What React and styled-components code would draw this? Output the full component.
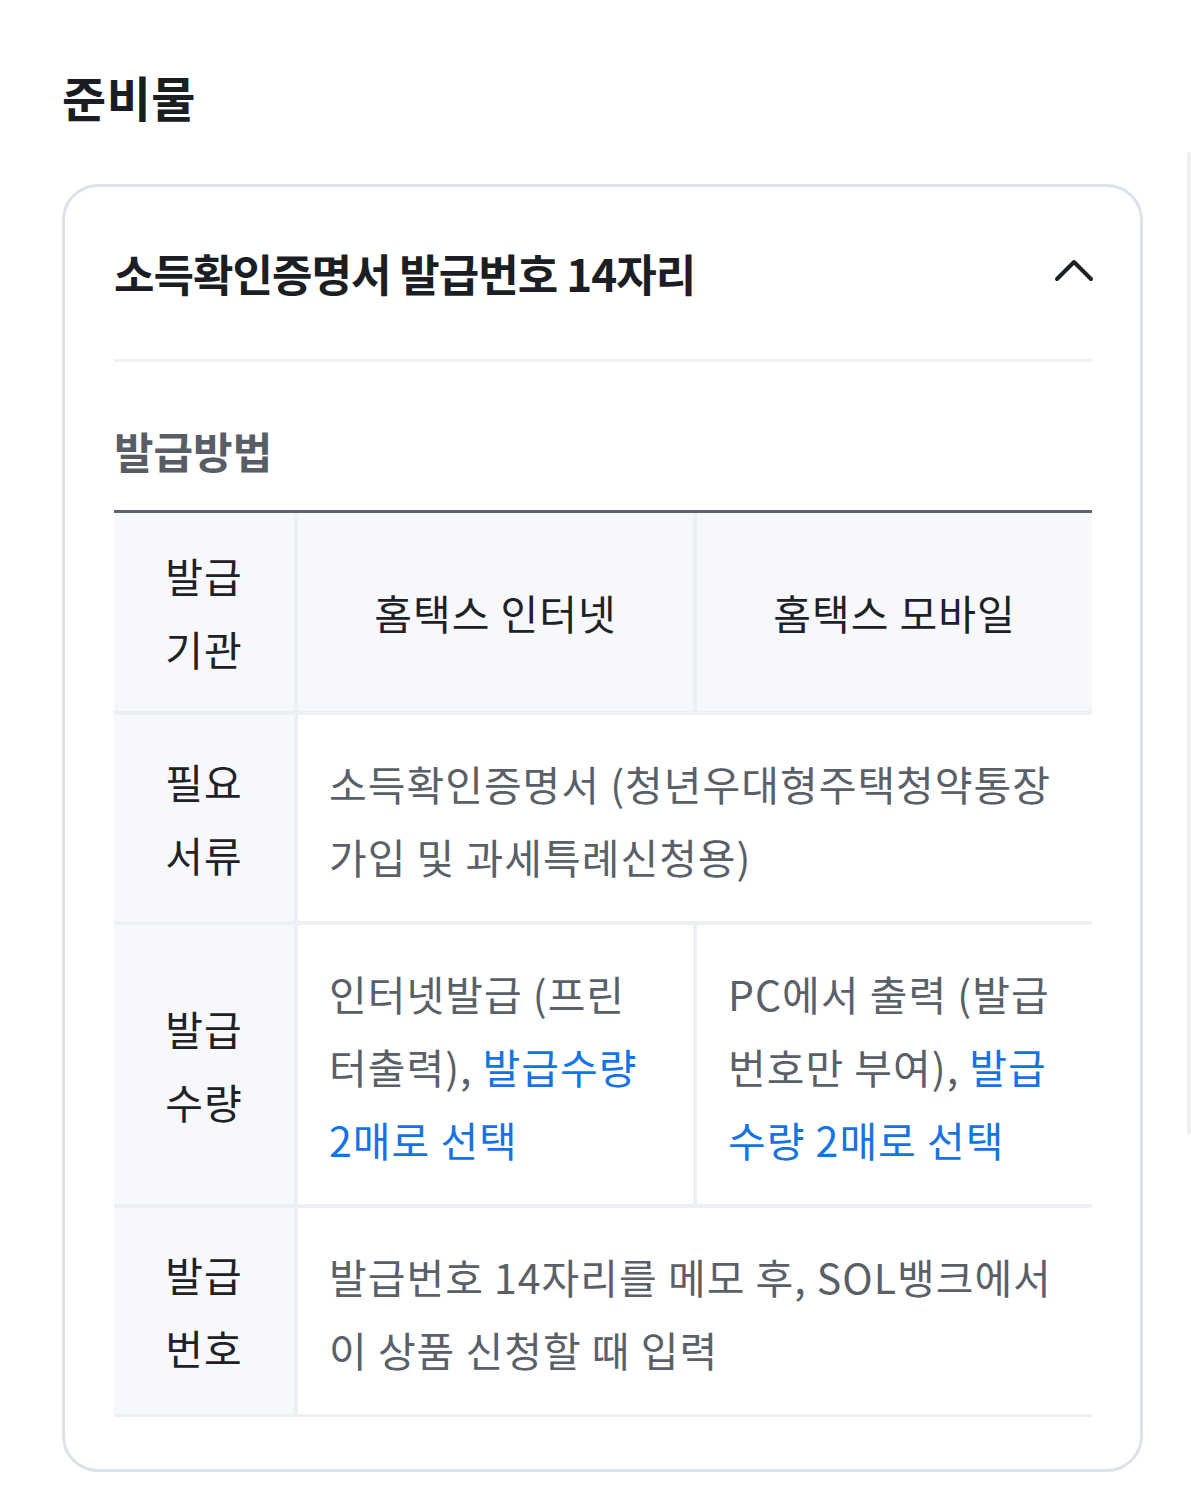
import styled, { createGlobalStyle } from 'styled-components';

const GlobalStyle = createGlobalStyle`
  html, body {
    margin: 0;
    padding: 0;
    background: #ffffff;
  }
  body {
    font-family: 'Noto Sans CJK KR', 'Noto Sans', sans-serif;
    -webkit-font-smoothing: antialiased;
  }
`;

const rows = [
  {
    head: ['발급', '기관'],
    cells: [{ text: '홈택스 인터넷' }, { text: '홈택스 모바일' }],
    shaded: true,
  },
  {
    head: ['필요', '서류'],
    cells: [
      {
        span: true,
        parts: [
          { text: '소득확인증명서 (청년우대형주택청약통장' },
          { br: true },
          { text: '가입 및 과세특례신청용)' },
        ],
      },
    ],
  },
  {
    head: ['발급', '수량'],
    cells: [
      {
        parts: [
          { text: '인터넷발급 (프린' },
          { br: true },
          { text: '터출력), ' },
          { text: '발급수량', link: true },
          { br: true },
          { text: '2매로 선택', link: true },
        ],
      },
      {
        parts: [
          { text: 'PC에서 출력 (발급' },
          { br: true },
          { text: '번호만 부여), ' },
          { text: '발급', link: true },
          { br: true },
          { text: '수량 2매로 선택', link: true },
        ],
      },
    ],
  },
  {
    head: ['발급', '번호'],
    cells: [
      {
        span: true,
        parts: [
          { text: '발급번호 14자리를 메모 후, SOL뱅크에서' },
          { br: true },
          { text: '이 상품 신청할 때 입력' },
        ],
      },
    ],
  },
];

const App = () => {
  return (
    <>
      <GlobalStyle />
      <Page>
        <Title>준비물</Title>
        <Card>
          <CardHeader>
            <CardTitle>소득확인증명서 발급번호 14자리</CardTitle>
            <Chevron viewBox='0 0 40 26' aria-hidden='true'>
              <path d='M3 22 L20 5 L37 22' />
            </Chevron>
          </CardHeader>
          <Divider />
          <SubTitle>발급방법</SubTitle>
          <Table>
            {rows.map((row, i) => (
              <Row key={i}>
                <HeadCell>
                  <span>
                    {row.head[0]}
                    <br />
                    {row.head[1]}
                  </span>
                </HeadCell>
                {row.cells.map((cell, j) =>
                  row.shaded ? (
                    <CenterCell key={j}>{cell.text}</CenterCell>
                  ) : (
                    <TextCell key={j} $span={cell.span}>
                      {cell.parts.map((p, k) =>
                        p.br ? (
                          <br key={k} />
                        ) : p.link ? (
                          <Link key={k}>{p.text}</Link>
                        ) : (
                          <span key={k}>{p.text}</span>
                        )
                      )}
                    </TextCell>
                  )
                )}
              </Row>
            ))}
          </Table>
        </Card>
        <ScrollThumb />
      </Page>
    </>
  );
};

const Page = styled.main`
  position: relative;
  min-height: 1503px;
  box-sizing: border-box;
  padding: 66px 48px 0 62px;
`;

const Title = styled.h2`
  margin: 0 0 58px;
  font-size: 48px;
  line-height: 60px;
  font-weight: 700;
  letter-spacing: 0.5px;
  color: #1a1d21;
`;

const Card = styled.section`
  border: 3px solid #dde2e8;
  border-radius: 36px;
  padding: 0 48px 52px 49px;
`;

const CardHeader = styled.div`
  height: 172px;
  display: flex;
  align-items: center;
  justify-content: space-between;
`;

const CardTitle = styled.h3`
  margin: 0;
  font-size: 44px;
  line-height: 56px;
  font-weight: 700;
  letter-spacing: -1px;
  color: #1b1e22;
`;

const Chevron = styled.svg`
  width: 40px;
  height: 26px;
  margin: 0 -2px 6px 0;
  fill: none;
  stroke: #1e2125;
  stroke-width: 4;
  stroke-linecap: round;
  stroke-linejoin: round;
`;

const Divider = styled.hr`
  margin: 0;
  border: none;
  height: 3px;
  background: #eef0f4;
`;

const SubTitle = styled.h4`
  margin: 60px 0 32px;
  font-size: 43px;
  line-height: 56px;
  font-weight: 700;
  letter-spacing: 0px;
  color: #575e66;
`;

const Table = styled.div`
  display: grid;
  grid-template-columns: 180px 1fr 1fr;
  row-gap: 4px;
  column-gap: 4px;
  background: #eceff5;
  border-top: 3px solid #5d646c;
  border-bottom: 3px solid #eceff5;
`;

const Row = styled.div`
  display: contents;
`;

const BaseCell = styled.div`
  font-size: 41px;
  line-height: 73px;
  letter-spacing: 1px;
  white-space: nowrap;
`;

const HeadCell = styled(BaseCell)`
  display: flex;
  align-items: center;
  justify-content: center;
  text-align: center;
  background: #f6f8fb;
  color: #1e2125;
  padding: 26px 0;
`;

const CenterCell = styled(BaseCell)`
  display: flex;
  align-items: center;
  justify-content: center;
  background: #f6f8fb;
  color: #1e2125;
`;

const TextCell = styled(BaseCell)`
  grid-column: ${(p) => (p.$span ? 'span 2' : 'auto')};
  background: #ffffff;
  color: #5a6068;
  padding: 32px 20px 28px 31px;
  overflow: hidden;
`;

const Link = styled.span`
  color: #1673e6;
`;

const ScrollThumb = styled.div`
  position: absolute;
  top: 152px;
  right: 0;
  width: 4px;
  height: 982px;
  border-radius: 2px;
  background: #efefef;
`;

export default App;
